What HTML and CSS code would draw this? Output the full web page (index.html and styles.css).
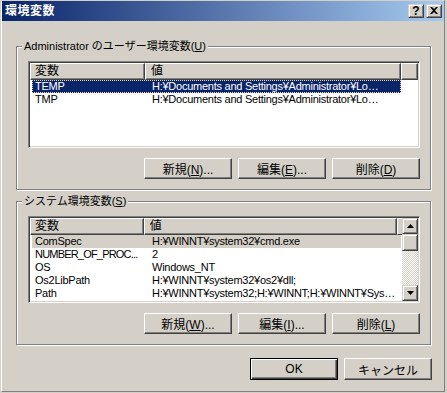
FILE: index.html
```html
<!DOCTYPE html>
<html lang="ja">
<head>
    <meta charset="UTF-8">
    <meta name="viewport" content="width=device-width, initial-scale=1.0">
    <title>環境変数</title>
    <link rel="stylesheet" href="styles.css">
</head>
<body>
    <div class="window">
        <div class="titlebar">
            <span class="title">環境変数</span>
            <div class="caption-buttons">
                <button class="caption-btn help">?</button>
                <button class="caption-btn close">
                    <svg width="8" height="7" viewBox="0 0 8 7"><path d="M0 0h2l2 2 2-2h2L5 3.5 8 7H6L4 5 2 7H0l3-3.5z"/></svg>
                </button>
            </div>
        </div>

        <div class="group user-group">
            <div class="group-label">Administrator のユーザー環境変数(<u>U</u>)</div>
            <div class="listview">
                <div class="list-main">
                    <div class="list-header">
                        <div class="col-head col-name">変数</div>
                        <div class="col-head col-value">値</div>
                        <div class="col-head col-fill"></div>
                    </div>
                    <div class="row selected">
                        <span class="cell-name">TEMP</span>
                        <span class="cell-value">H:¥Documents and Settings¥Administrator¥Lo…</span>
                    </div>
                    <div class="row">
                        <span class="cell-name">TMP</span>
                        <span class="cell-value">H:¥Documents and Settings¥Administrator¥Lo…</span>
                    </div>
                </div>
            </div>
            <div class="button-row">
                <button class="btn">新規(<u>N</u>)...</button>
                <button class="btn">編集(<u>E</u>)...</button>
                <button class="btn">削除(<u>D</u>)</button>
            </div>
        </div>

        <div class="group system-group">
            <div class="group-label">システム環境変数(<u>S</u>)</div>
            <div class="listview">
                <div class="list-main">
                    <div class="list-header">
                        <div class="col-head col-name">変数</div>
                        <div class="col-head col-value">値</div>
                        <div class="col-head col-fill narrow"></div>
                    </div>
                    <div class="row inactive">
                        <span class="cell-name">ComSpec</span>
                        <span class="cell-value">H:¥WINNT¥system32¥cmd.exe</span>
                    </div>
                    <div class="row">
                        <span class="cell-name long">NUMBER_OF_PROC...</span>
                        <span class="cell-value">2</span>
                    </div>
                    <div class="row">
                        <span class="cell-name">OS</span>
                        <span class="cell-value">Windows_NT</span>
                    </div>
                    <div class="row">
                        <span class="cell-name">Os2LibPath</span>
                        <span class="cell-value">H:¥WINNT¥system32¥os2¥dll;</span>
                    </div>
                    <div class="row">
                        <span class="cell-name">Path</span>
                        <span class="cell-value">H:¥WINNT¥system32;H:¥WINNT;H:¥WINNT¥Sys…</span>
                    </div>
                </div>
                <div class="scrollbar">
                    <div class="scroll-btn">
                        <svg width="7" height="4" viewBox="0 0 7 4"><path d="M3.5 0 7 4H0z"/></svg>
                    </div>
                    <div class="scroll-thumb"></div>
                    <div class="scroll-track"></div>
                    <div class="scroll-btn">
                        <svg width="7" height="4" viewBox="0 0 7 4"><path d="M0 0h7L3.5 4z"/></svg>
                    </div>
                </div>
            </div>
            <div class="button-row">
                <button class="btn">新規(<u>W</u>)...</button>
                <button class="btn">編集(<u>I</u>)...</button>
                <button class="btn">削除(<u>L</u>)</button>
            </div>
        </div>

        <div class="dialog-buttons">
            <button class="btn default">OK</button>
            <button class="btn">キャンセル</button>
        </div>
    </div>
</body>
</html>
```

FILE: styles.css
```css
* {
    margin: 0;
    padding: 0;
    box-sizing: border-box;
}

body {
    background: #d4d0c8;
    font-family: "Liberation Sans", "Noto Sans CJK JP", sans-serif;
    font-size: 11px;
    color: #000;
}

.window {
    margin-left: 1px;
    width: 444px;
    height: 392px;
    border-top: 1px solid #d4d0c8;
    border-left: 1px solid #fff;
    border-right: 1px solid #808080;
    border-bottom: 1px solid #808080;
    box-shadow: 0 1px 0 #404040;
}

/* title bar */
.titlebar {
    height: 20px;
    background: linear-gradient(to right, #0a246a, #a6caf0);
    display: flex;
    align-items: center;
    justify-content: space-between;
    padding: 0 2px 0 3px;
}

.title {
    color: #fff;
    font-weight: bold;
    font-size: 12px;
    line-height: 14px;
    letter-spacing: 0.5px;
}

.caption-buttons {
    display: flex;
    gap: 2px;
}

.caption-btn,
.scroll-btn,
.scroll-thumb {
    background: #d4d0c8;
    border: 1px solid;
    border-color: #d4d0c8 #404040 #404040 #d4d0c8;
    box-shadow: inset 1px 1px #fff, inset -1px -1px #808080;
    display: flex;
    align-items: center;
    justify-content: center;
}

.caption-btn {
    width: 16px;
    height: 14px;
    font: bold 12px "Liberation Sans", sans-serif;
    line-height: 12px;
    color: #000;
}

.close svg {
    margin-top: -1px;
}

/* group boxes */
.group {
    margin: 0 13px 0 14px;
    border: 1px solid #808080;
    box-shadow: 1px 1px 0 #fff, inset 1px 1px 0 #fff;
    padding: 0 10px 10px 11px;
}

.user-group {
    margin-top: 25px;
}

.system-group {
    margin-top: 11px;
}

.group-label {
    display: table;
    margin: -7px 0 0 -6px;
    padding: 0 2px;
    background: #d4d0c8;
    line-height: 13px;
}

/* list views */
.listview {
    display: flex;
    margin-top: 8px;
    height: 87px;
    background: #fff;
    border: 1px solid;
    border-color: #808080 #fff #fff #808080;
    box-shadow: inset 1px 1px #404040, inset -1px -1px #d4d0c8;
    padding: 1px;
}

.list-main {
    flex: 1;
    overflow: hidden;
}

.list-header {
    display: flex;
    height: 17px;
}

.col-head {
    background: #d4d0c8;
    border: 1px solid;
    border-color: #fff #404040 #404040 #fff;
    box-shadow: inset -1px -1px #808080;
    font-size: 12px;
    line-height: 14px;
    padding-left: 4px;
}

.col-name {
    width: 115px;
}

.col-value {
    width: 256px;
    padding-left: 5px;
}

.col-fill {
    flex: 1;
}

.col-fill.narrow {
    border-right: none;
    box-shadow: none;
}

.row {
    display: flex;
    width: 369px;
    height: 13px;
    margin-left: 2px;
    line-height: 13px;
    letter-spacing: -0.25px;
    white-space: nowrap;
}

.cell-name {
    width: 113px;
    padding-left: 3px;
    overflow: hidden;
}

.cell-name.long {
    letter-spacing: -0.8px;
}

.cell-value {
    width: 256px;
    padding-left: 7px;
    overflow: hidden;
}

.row.selected {
    background: #0a246a;
    color: #fff;
    outline: 1px dotted #f5db95;
    outline-offset: -1px;
}

.row.inactive {
    background: #d4d0c8;
}

/* scroll bar */
.scrollbar {
    width: 16px;
    display: flex;
    flex-direction: column;
}

.scroll-btn {
    height: 16px;
}

.scroll-thumb {
    height: 17px;
}

.scroll-track {
    flex: 1;
    background: repeating-conic-gradient(#fff 0 25%, #d4d0c8 0 50%) 0 0 / 2px 2px;
}

/* push buttons */
.button-row {
    display: flex;
    justify-content: flex-end;
    gap: 6px;
    margin-top: 10px;
}

.btn {
    width: 88px;
    height: 21px;
    background: #d4d0c8;
    border: 1px solid;
    border-color: #fff #404040 #404040 #fff;
    box-shadow: inset -1px -1px #808080;
    font-family: inherit;
    font-size: 12px;
    color: #000;
}

.dialog-buttons {
    display: flex;
    justify-content: flex-end;
    gap: 6px;
    margin: 13px 12px 0 0;
}

.dialog-buttons .btn {
    height: 22px;
}

.btn.default {
    border-color: #000;
    box-shadow: inset 1px 1px #fff, inset -1px -1px #404040, inset -2px -2px #808080;
}
```
